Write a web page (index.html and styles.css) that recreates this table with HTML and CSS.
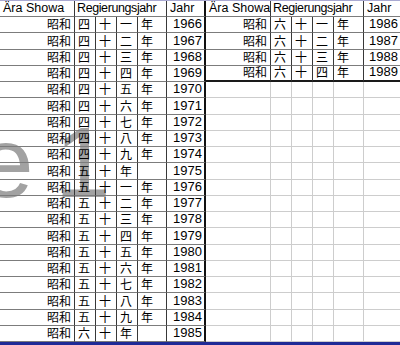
FILE: index.html
```html
<!DOCTYPE html>
<html lang="de">
<head>
<meta charset="utf-8">
<title>Showa</title>
<link rel="stylesheet" href="styles.css">
</head>
<body>
<div class="sheet">
  <div class="wm"><span class="wm-e">e</span><span class="wm-1">1</span></div>
  <div class="grid">
    <div class="c hd">Ära Showa</div><div class="c hd span4 rj">Regierungsjahr</div><div class="c hd f">Jahr</div>
    <div class="c hd">Ära Showa</div><div class="c hd span4 rj">Regierungsjahr</div><div class="c hd last">Jahr</div>

    <div class="c r">昭和</div><div class="c k">四</div><div class="c k">十</div><div class="c k">一</div><div class="c k">年</div><div class="c n f">1966</div>
    <div class="c r">昭和</div><div class="c k">六</div><div class="c k">十</div><div class="c k">一</div><div class="c k">年</div><div class="c n last">1986</div>

    <div class="c r">昭和</div><div class="c k">四</div><div class="c k">十</div><div class="c k">二</div><div class="c k">年</div><div class="c n f">1967</div>
    <div class="c r">昭和</div><div class="c k">六</div><div class="c k">十</div><div class="c k">二</div><div class="c k">年</div><div class="c n last">1987</div>

    <div class="c r">昭和</div><div class="c k">四</div><div class="c k">十</div><div class="c k">三</div><div class="c k">年</div><div class="c n f">1968</div>
    <div class="c r">昭和</div><div class="c k">六</div><div class="c k">十</div><div class="c k">三</div><div class="c k">年</div><div class="c n last">1988</div>

    <div class="c r">昭和</div><div class="c k">四</div><div class="c k">十</div><div class="c k">四</div><div class="c k">年</div><div class="c n f">1969</div>
    <div class="c r b">昭和</div><div class="c k b">六</div><div class="c k b">十</div><div class="c k b">四</div><div class="c k b">年</div><div class="c n b last">1989</div>

    <div class="c r">昭和</div><div class="c k">四</div><div class="c k">十</div><div class="c k">五</div><div class="c k">年</div><div class="c n f">1970</div>
    <div class="c g"></div><div class="c g"></div><div class="c g"></div><div class="c g"></div><div class="c g"></div><div class="c g last"></div>

    <div class="c r">昭和</div><div class="c k">四</div><div class="c k">十</div><div class="c k">六</div><div class="c k">年</div><div class="c n f">1971</div>
    <div class="c g"></div><div class="c g"></div><div class="c g"></div><div class="c g"></div><div class="c g"></div><div class="c g last"></div>

    <div class="c r">昭和</div><div class="c k">四</div><div class="c k">十</div><div class="c k">七</div><div class="c k">年</div><div class="c n f">1972</div>
    <div class="c g"></div><div class="c g"></div><div class="c g"></div><div class="c g"></div><div class="c g"></div><div class="c g last"></div>

    <div class="c r">昭和</div><div class="c k">四</div><div class="c k">十</div><div class="c k">八</div><div class="c k">年</div><div class="c n f">1973</div>
    <div class="c g"></div><div class="c g"></div><div class="c g"></div><div class="c g"></div><div class="c g"></div><div class="c g last"></div>

    <div class="c r">昭和</div><div class="c k">四</div><div class="c k">十</div><div class="c k">九</div><div class="c k">年</div><div class="c n f">1974</div>
    <div class="c g"></div><div class="c g"></div><div class="c g"></div><div class="c g"></div><div class="c g"></div><div class="c g last"></div>

    <div class="c r">昭和</div><div class="c k">五</div><div class="c k">十</div><div class="c k">年</div><div class="c k"></div><div class="c n f">1975</div>
    <div class="c g"></div><div class="c g"></div><div class="c g"></div><div class="c g"></div><div class="c g"></div><div class="c g last"></div>

    <div class="c r">昭和</div><div class="c k">五</div><div class="c k">十</div><div class="c k">一</div><div class="c k">年</div><div class="c n f">1976</div>
    <div class="c g"></div><div class="c g"></div><div class="c g"></div><div class="c g"></div><div class="c g"></div><div class="c g last"></div>

    <div class="c r">昭和</div><div class="c k">五</div><div class="c k">十</div><div class="c k">二</div><div class="c k">年</div><div class="c n f">1977</div>
    <div class="c g"></div><div class="c g"></div><div class="c g"></div><div class="c g"></div><div class="c g"></div><div class="c g last"></div>

    <div class="c r">昭和</div><div class="c k">五</div><div class="c k">十</div><div class="c k">三</div><div class="c k">年</div><div class="c n f">1978</div>
    <div class="c g"></div><div class="c g"></div><div class="c g"></div><div class="c g"></div><div class="c g"></div><div class="c g last"></div>

    <div class="c r">昭和</div><div class="c k">五</div><div class="c k">十</div><div class="c k">四</div><div class="c k">年</div><div class="c n f">1979</div>
    <div class="c g"></div><div class="c g"></div><div class="c g"></div><div class="c g"></div><div class="c g"></div><div class="c g last"></div>

    <div class="c r">昭和</div><div class="c k">五</div><div class="c k">十</div><div class="c k">五</div><div class="c k">年</div><div class="c n f">1980</div>
    <div class="c g"></div><div class="c g"></div><div class="c g"></div><div class="c g"></div><div class="c g"></div><div class="c g last"></div>

    <div class="c r">昭和</div><div class="c k">五</div><div class="c k">十</div><div class="c k">六</div><div class="c k">年</div><div class="c n f">1981</div>
    <div class="c g"></div><div class="c g"></div><div class="c g"></div><div class="c g"></div><div class="c g"></div><div class="c g last"></div>

    <div class="c r">昭和</div><div class="c k">五</div><div class="c k">十</div><div class="c k">七</div><div class="c k">年</div><div class="c n f">1982</div>
    <div class="c g"></div><div class="c g"></div><div class="c g"></div><div class="c g"></div><div class="c g"></div><div class="c g last"></div>

    <div class="c r">昭和</div><div class="c k">五</div><div class="c k">十</div><div class="c k">八</div><div class="c k">年</div><div class="c n f">1983</div>
    <div class="c g"></div><div class="c g"></div><div class="c g"></div><div class="c g"></div><div class="c g"></div><div class="c g last"></div>

    <div class="c r">昭和</div><div class="c k">五</div><div class="c k">十</div><div class="c k">九</div><div class="c k">年</div><div class="c n f">1984</div>
    <div class="c g"></div><div class="c g"></div><div class="c g"></div><div class="c g"></div><div class="c g"></div><div class="c g last"></div>

    <div class="c r">昭和</div><div class="c k">六</div><div class="c k">十</div><div class="c k">年</div><div class="c k"></div><div class="c n f">1985</div>
    <div class="c g"></div><div class="c g"></div><div class="c g"></div><div class="c g"></div><div class="c g"></div><div class="c g last"></div>
  </div>
  <div class="tabbar"></div>
</div>
</body>
</html>
```

FILE: styles.css
```css
html, body {
  margin: 0;
  padding: 0;
  background: #fff;
}

body {
  width: 400px;
  height: 345px;
  overflow: hidden;
  font-family: "Liberation Sans", Arial, sans-serif;
  color: #000;
}

.sheet {
  position: relative;
  width: 400px;
  height: 345px;
}

.wm {
  position: absolute;
  left: 0;
  top: 0;
  width: 400px;
  height: 345px;
  font-family: "Liberation Sans", Arial, sans-serif;
  font-size: 100px;
  line-height: 1;
  color: #a2a2a2;
  z-index: 0;
}

.wm-e {
  position: absolute;
  left: -22px;
  top: 112px;
}

.wm-1 {
  position: absolute;
  left: 55px;
  top: 112px;
}

.grid {
  position: relative;
  z-index: 1;
  display: grid;
  grid-template-columns: 75px 21px 21px 21px 29px 39px 65px 21px 21px 21px 30px 36px;
  grid-template-rows: 16px repeat(20, 16.25px);
  border-top: 1px solid #a9a9d2;
}

.c {
  box-sizing: border-box;
  border-right: 1px solid #383838;
  border-bottom: 1px solid #7c7c7c;
  display: flex;
  align-items: flex-end;
  padding: 0 3px 1px 3px;
  font-size: 12.5px;
  line-height: 14px;
  white-space: nowrap;
  overflow: visible;
}

.hd {
  padding-left: 3px;
}

.span4 {
  grid-column: span 4;
}

.rj {
  padding-left: 2px;
  letter-spacing: -0.4px;
}

.r {
  justify-content: flex-end;
  font-family: "Noto Sans CJK JP", sans-serif;
  font-size: 12px;
}

.k {
  font-family: "Noto Sans CJK JP", sans-serif;
  font-size: 12px;
}

.n {
  justify-content: flex-end;
  padding-right: 2px;
  font-size: 13px;
}

.f {
  border-right: 2px solid #111;
}

.b {
  border-bottom: 2px solid #1a1a1a;
}

.g {
  border-right-color: #cdcdcd;
  border-bottom-color: #cdcdcd;
}

.last {
  border-right: none;
}

.tabbar {
  height: 3px;
  background: #1f2a96;
}
```
